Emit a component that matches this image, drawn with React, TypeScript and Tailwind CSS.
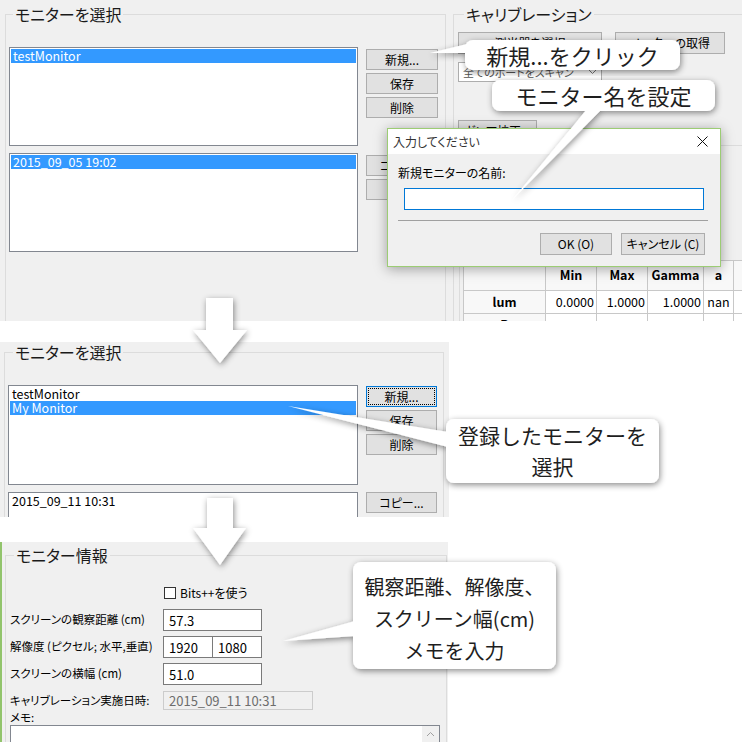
import type { FC, ReactNode } from "react";

// Windows-style building blocks used by all three screenshot panels.
const Btn: FC<{ children?: ReactNode; className?: string }> = ({ children, className = "" }) => (
  <div
    className={`flex items-center justify-center whitespace-nowrap border border-[#adadad] bg-[#e1e1e1] text-[12px] leading-none text-black ${className}`}
  >
    {children}
  </div>
);

const FocusBtn: FC<{ children?: ReactNode }> = ({ children }) => (
  <div className="flex h-[21px] border border-[#0078d7] bg-[#e1e1e1] p-[1px]">
    <span className="flex flex-1 items-center justify-center border border-dotted border-black text-[12px] leading-none">
      {children}
    </span>
  </div>
);

interface Item {
  label: string;
  selected?: boolean;
}

const ListBox: FC<{ items: Item[]; className?: string }> = ({ items, className = "" }) => (
  <div className={`border border-[#828790] bg-white p-[1px] ${className}`}>
    {items.map((it) => (
      <div
        key={it.label}
        className={
          it.selected
            ? "bg-[#3399ff] px-[2px] text-[12.5px] leading-[14px] text-white"
            : "px-[2px] text-[12.5px] leading-[14px] text-black"
        }
      >
        {it.label}
      </div>
    ))}
  </div>
);

const Field: FC<{ children?: ReactNode; className?: string }> = ({ children, className = "" }) => (
  <div
    className={`flex items-center border border-[#7a7a7a] bg-white pl-[5px] text-[13px] leading-none text-black ${className}`}
  >
    {children}
  </div>
);

const Label: FC<{ children: ReactNode }> = ({ children }) => (
  <div className="w-[153px] shrink-0 whitespace-nowrap text-[11.5px] leading-none text-black">{children}</div>
);

const TopPanel: FC = () => (
  <div className="h-[321px] w-[742px] overflow-hidden bg-[#f0f0f0]">
    <div className="flex items-start">
      {/* left group: monitor select */}
      <fieldset className="ml-[5px] mt-[5px] h-[340px] w-[441px] min-w-0 shrink-0 border border-[#dcdcdc] pl-[3px]">
        <legend className="ml-[4px] px-[2px] text-[16px] leading-[18px] text-[#1a1a1a]">モニターを選択</legend>
        <div className="mt-[24px] flex items-start gap-[8px]">
          <div className="flex w-[349px] flex-col gap-[7px]">
            <ListBox className="h-[99px]" items={[{ label: "testMonitor", selected: true }]} />
            <ListBox className="h-[99px]" items={[{ label: "2015_09_05 19:02", selected: true }]} />
          </div>
          <div className="mt-[2px] flex w-[72px] flex-col gap-[3px]">
            <Btn className="h-[21px]">新規...</Btn>
            <Btn className="h-[21px]">保存</Btn>
            <Btn className="h-[21px]">削除</Btn>
            <Btn className="mt-[34px] h-[21px]">コピー...</Btn>
            <Btn className="h-[21px]">削除</Btn>
          </div>
        </div>
      </fieldset>

      {/* right group: calibration */}
      <fieldset className="ml-[7px] mt-[5px] h-[340px] w-[300px] min-w-0 shrink-0 border border-[#dcdcdc] pl-[4px]">
        <legend className="ml-[6px] px-[2px] text-[16px] leading-[18px] text-[#1a1a1a]">キャリブレーション</legend>
        <div className="mt-[9px] flex gap-[13px]">
          <Btn className="h-[22px] w-[144px]">測光器を選択</Btn>
          <Btn className="h-[22px] w-[110px]">メーターの取得</Btn>
        </div>
        <div className="mt-[8px] flex h-[20px] w-[144px] items-center justify-between border border-[#adadad] bg-white px-[4px] text-[11px] leading-none text-[#555]">
          <span>全てのポートをスキャン</span>
          <svg width="9" height="6" viewBox="0 0 9 6">
            <path d="M1 1 L4.5 4.5 L8 1" fill="none" stroke="#777" strokeWidth="1" />
          </svg>
        </div>
        <Btn className="mt-[38px] h-[21px] w-[79px]">ガンマ校正...</Btn>
        <div className="ml-[1px] mt-[4px] border-l border-t border-[#dcdcdc] pl-[3px] pt-[114px]">
          <table className="w-[330px] table-fixed border-collapse text-[12.5px] text-black">
            <thead>
              <tr className="h-[30px]">
                <th className="w-[82px] border border-[#c8c8c8] bg-[#f8f8f8]" />
                <th className="w-[51px] border border-[#c8c8c8] bg-[#f8f8f8] font-bold">Min</th>
                <th className="w-[51px] border border-[#c8c8c8] bg-[#f8f8f8] font-bold">Max</th>
                <th className="w-[56px] border border-[#c8c8c8] bg-[#f8f8f8] font-bold">Gamma</th>
                <th className="w-[30px] border border-[#c8c8c8] bg-[#f8f8f8] font-bold">a</th>
                <th className="w-[60px] border border-[#c8c8c8] bg-[#f8f8f8] font-bold">b</th>
              </tr>
            </thead>
            <tbody>
              {["lum", "R"].map((r) => (
                <tr key={r} className="h-[23px] bg-white">
                  <td className="border border-[#c8c8c8] bg-[#f8f8f8] text-center font-bold">{r}</td>
                  <td className="border border-[#c8c8c8] pr-[2px] text-right">0.0000</td>
                  <td className="border border-[#c8c8c8] pr-[2px] text-right">1.0000</td>
                  <td className="border border-[#c8c8c8] pr-[2px] text-right">1.0000</td>
                  <td className="border border-[#c8c8c8] text-center">nan</td>
                  <td className="border border-[#c8c8c8] text-center">nan</td>
                </tr>
              ))}
            </tbody>
          </table>
        </div>
      </fieldset>
    </div>
  </div>
);

const MiddlePanel: FC = () => (
  <div className="mt-[21px] h-[175px] w-[449px] overflow-hidden bg-[#f0f0f0] pt-[1px]">
    <fieldset className="ml-[4px] h-[200px] w-[440px] min-w-0 border border-[#dcdcdc] pl-[3px]">
      <legend className="ml-[5px] px-[2px] text-[16px] leading-[18px] text-[#1a1a1a]">モニターを選択</legend>
      <div className="mt-[24px] flex items-start gap-[8px]">
        <div className="flex w-[350px] flex-col gap-[7px]">
          <ListBox
            className="h-[100px]"
            items={[{ label: "testMonitor" }, { label: "My Monitor", selected: true }]}
          />
          <ListBox className="h-[100px]" items={[{ label: "2015_09_11 10:31" }]} />
        </div>
        <div className="mt-[1px] flex w-[71px] flex-col gap-[3px]">
          <FocusBtn>新規...</FocusBtn>
          <Btn className="h-[21px]">保存</Btn>
          <Btn className="h-[21px]">削除</Btn>
          <Btn className="mt-[34px] h-[21px]">コピー...</Btn>
        </div>
      </div>
    </fieldset>
  </div>
);

const BottomPanel: FC = () => (
  <div className="mt-[25px] h-[200px] w-[448px] overflow-hidden border-l-2 border-[#92c46c] bg-[#f0f0f0] pt-[4px]">
    <fieldset className="ml-[3px] h-[220px] w-[442px] min-w-0 border border-[#dcdcdc] pl-[4px]">
      <legend className="ml-[4px] px-[2px] text-[16px] leading-[18px] text-[#1a1a1a]">モニター情報</legend>
      <div className="mt-[22px] flex h-[13px] items-center">
        <div className="w-[154px] shrink-0" />
        <div className="h-[12px] w-[12px] border border-[#333] bg-white" />
        <span className="ml-[4px] text-[12px] leading-none">Bits++を使う</span>
      </div>
      <div className="mt-[10px] flex h-[22px] items-center">
        <Label>スクリーンの観察距離 (cm)</Label>
        <Field className="h-[22px] w-[99px]">57.3</Field>
      </div>
      <div className="mt-[5px] flex h-[22px] items-center">
        <Label>解像度 (ピクセル; 水平,垂直)</Label>
        <Field className="h-[22px] w-[50px]">1920</Field>
        <Field className="-ml-px h-[22px] w-[50px]">1080</Field>
      </div>
      <div className="mt-[5px] flex h-[22px] items-center">
        <Label>スクリーンの横幅 (cm)</Label>
        <Field className="h-[22px] w-[99px]">51.0</Field>
      </div>
      <div className="mt-[6px] flex h-[19px] items-center">
        <Label>キャリブレーション実施日時:</Label>
        <div className="flex h-[19px] w-[150px] items-center border border-[#cccccc] bg-[#f0f0f0] pl-[5px] text-[13px] leading-none text-[#6d6d6d]">
          2015_09_11 10:31
        </div>
      </div>
      <div className="h-[15px] text-[11.5px] leading-[15px]">メモ:</div>
      <div className="flex h-[40px] w-[430px] border border-[#828790] bg-white">
        <div className="flex-1" />
        <div className="flex w-[17px] justify-center bg-[#f0f0f0] pt-[5px]">
          <svg width="9" height="6" viewBox="0 0 9 6">
            <path d="M1 5 L4.5 1.5 L8 5" fill="none" stroke="#a0a0a0" strokeWidth="1" />
          </svg>
        </div>
      </div>
    </fieldset>
  </div>
);

// Input dialog that lies over the first screenshot
const InputDialog: FC = () => (
  <div className="absolute left-[387px] top-[128px] flex h-[139px] w-[334px] flex-col border border-[#9ccc74] bg-[#f0f0f0] shadow-[0_2px_12px_rgba(0,0,0,0.35)]">
    <div className="flex h-[25px] shrink-0 items-center justify-between bg-white pl-[5px] pr-[12px]">
      <span className="text-[12px] leading-none text-[#333]">入力してください</span>
      <svg width="11" height="11" viewBox="0 0 11 11">
        <path d="M0.5 0.5 L10.5 10.5 M10.5 0.5 L0.5 10.5" stroke="#111" strokeWidth="1" />
      </svg>
    </div>
    <div className="flex flex-col px-[10px]">
      <div className="mt-[12px] text-[12px] leading-[14px]">新規モニターの名前:</div>
      <div className="ml-[6px] mt-[8px] h-[22px] w-[300px] border border-[#0078d7] bg-white" />
      <div className="mt-[10px] h-px w-[310px] bg-[#a0a0a0]" />
      <div className="mr-[5px] mt-[12px] flex justify-end gap-[9px]">
        <Btn className="h-[22px] w-[72px] text-[12.5px]">OK (O)</Btn>
        <Btn className="h-[22px] w-[84px] text-[12.5px]">キャンセル (C)</Btn>
      </div>
    </div>
  </div>
);

// Arrows and callout bubbles drawn over the screenshots
const Annotations: FC = () => (
  <svg className="pointer-events-none absolute left-0 top-0" width="742" height="742" viewBox="0 0 742 742">
    <defs>
      <filter id="sh" x="-20%" y="-20%" width="140%" height="140%">
        <feDropShadow dx="1" dy="2" stdDeviation="3" floodColor="#000" floodOpacity="0.45" />
      </filter>
    </defs>
    <g filter="url(#sh)" fill="#fff">
      <polygon points="206,298 233,298 233,330 247,330 220,363 193,330 206,330" />
      <polygon points="207,498 233,498 233,528 246,528 220,565 193,528 207,528" />
    </g>
    <g filter="url(#sh)" fill="#fff">
      <rect x="465" y="40" width="215" height="30" rx="8" />
      <polygon points="430,53 467,44 467,53" />
    </g>
    <g filter="url(#sh)" fill="#fff">
      <rect x="492" y="80" width="223" height="31" rx="8" />
      <polygon points="587,109 602,109 513,199" />
    </g>
    <g filter="url(#sh)" fill="#fff">
      <rect x="446" y="419" width="213" height="64" rx="8" />
      <polygon points="288,406 448,432 448,447" />
    </g>
    <g filter="url(#sh)" fill="#fff">
      <rect x="353" y="562" width="203" height="107" rx="8" />
      <polygon points="283,641 355,621 355,636" />
    </g>
  </svg>
);

const CALLOUT = "pointer-events-none absolute flex flex-col items-center text-[#1e1e1e] [font-feature-settings:normal]";

export default function App() {
  return (
    <div className="relative h-[742px] w-[742px] overflow-hidden bg-white font-['Noto_Sans_CJK_JP',sans-serif] text-black [font-feature-settings:'palt']">
      <TopPanel />
      <MiddlePanel />
      <BottomPanel />

      <InputDialog />
      <Annotations />

      <div className={`${CALLOUT} left-[465px] top-[40px] h-[30px] w-[215px] justify-center text-[22px] leading-[30px]`}>
        新規...をクリック
      </div>
      <div className={`${CALLOUT} left-[492px] top-[80px] h-[31px] w-[223px] justify-center text-[22px] leading-[31px]`}>
        モニター名を設定
      </div>
      <div className={`${CALLOUT} left-[446px] top-[419px] h-[64px] w-[213px] justify-center text-[21px] leading-[31px]`}>
        <span>登録したモニターを</span>
        <span>選択</span>
      </div>
      <div className={`${CALLOUT} left-[353px] top-[562px] h-[107px] w-[203px] pt-[9px] text-[20px] leading-[32px]`}>
        <span>観察距離、解像度、</span>
        <span>スクリーン幅(cm)</span>
        <span>メモを入力</span>
      </div>
    </div>
  );
}
